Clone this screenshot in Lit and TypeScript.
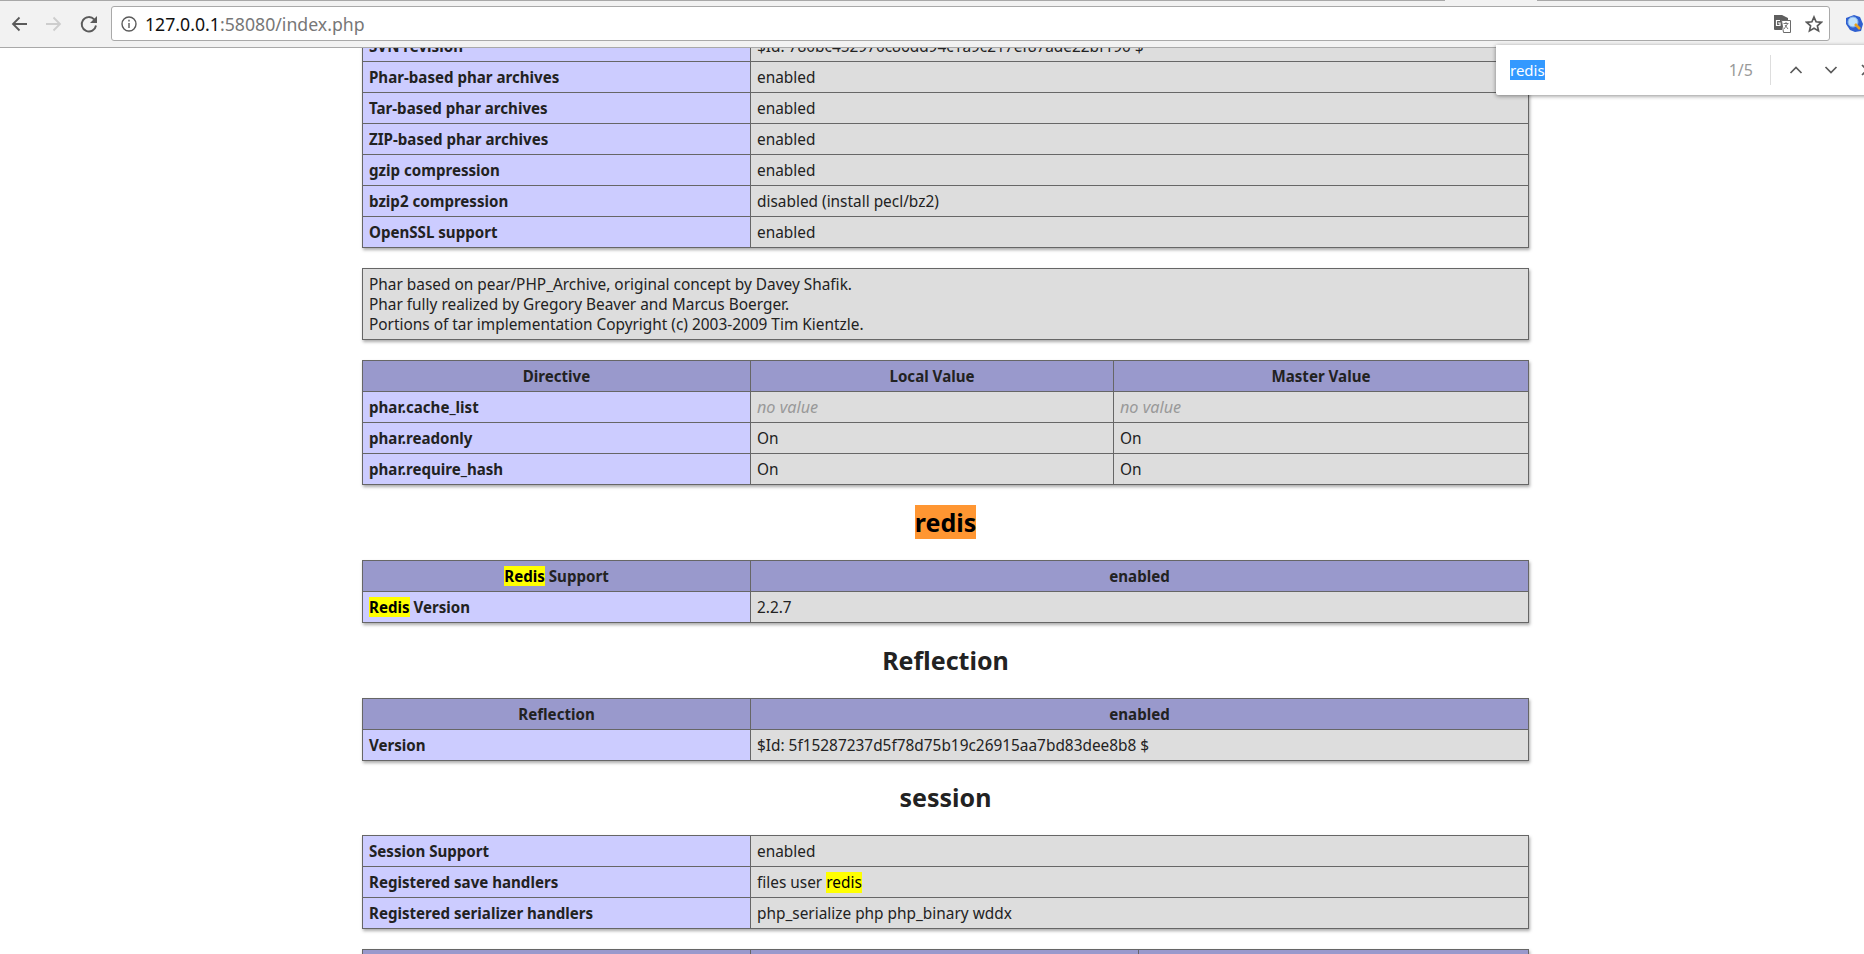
import { LitElement, css, html } from 'lit';
import { customElement } from 'lit/decorators.js';

const mark = (s: string) => html`<span class="hit">${s}</span>`;

@customElement('app-root')
export class AppRoot extends LitElement {
  private row(label: unknown, ...values: unknown[]) {
    return html`<tr>
      <td class="e">${label}</td>
      ${values.map((v) => html`<td class="v">${v}</td>`)}
    </tr>`;
  }

  private head(...titles: unknown[]) {
    return html`<tr class="h">${titles.map((t) => html`<th>${t}</th>`)}</tr>`;
  }

  private noValue() {
    return html`<i class="nv">no value</i>`;
  }

  private toolbar() {
    return html`
      <div class="toolbar">
        <svg width="20" height="20" viewBox="0 0 20 20" fill="none" stroke="#5a5a5a" stroke-width="1.8">
          <path d="M18 10H4M10.500 3.500L4 10l6.500 6.500" />
        </svg>
        <svg width="20" height="20" viewBox="0 0 20 20" fill="none" stroke="#cdcdcd" stroke-width="1.8">
          <path d="M2 10h14M9.500 3.500L16 10l-6.500 6.500" />
        </svg>
        <svg width="20" height="20" viewBox="0 0 20 20" fill="none" stroke="#5a5a5a" stroke-width="1.9">
          <path d="M15.200 5.400A7.200 7.200 0 1 0 17 11.500" />
          <path d="M18 2v7h-7z" fill="#5a5a5a" stroke="none" />
        </svg>
        <div class="omnibox">
          <svg width="16" height="16" viewBox="0 0 16 16" fill="none" stroke="#5a5a5a" stroke-width="1.4">
            <circle cx="8" cy="8" r="7" />
            <path d="M8 7v5M8 3.800v1.800" />
          </svg>
          <span class="url"><b>127.0.0.1</b>:58080/index.php</span>
          <span class="grow"></span>
          <svg width="18" height="18" viewBox="0 0 18 18">
            <path d="M1 0h8l6 3v2H9v10H2a1 1 0 0 1-1-1z" fill="#5f5f5f" />
            <path d="M8.500 5.500h9v12h-7z" fill="#fff" stroke="#6a6a6a" />
            <path d="M10.500 8.500h5M13 7v1.500M11 14l3.500-5M12 10l3 4" stroke="#6a6a6a" fill="none" stroke-width=".9" />
            <path d="M7 5.500H3.500v5H7V8H5" stroke="#fff" fill="none" stroke-width="1.200" />
          </svg>
          <svg class="star" width="18" height="18" viewBox="0 0 18 18" fill="none" stroke="#5a5a5a" stroke-width="1.700">
            <path d="M9 2l2.100 4.800 5.200.5-3.900 3.500 1.100 5.100L9 13.300l-4.500 2.600 1.100-5.100L1.700 7.300l5.200-.5z" />
          </svg>
        </div>
        <svg width="18" height="20" viewBox="0 0 18 20">
          <path d="M1 4l8-3 6 2 3 7-2 7-6 1-5-2-4-6z" fill="#2f5fd0" />
          <circle cx="8" cy="8" r="5" fill="#bfe0fa" stroke="#7fb2ee" />
          <path d="M10 10l5 5" stroke="#e8a020" stroke-width="2.600" />
        </svg>
      </div>
    `;
  }

  private findBar() {
    return html`
      <div class="find">
        <span class="query">redis</span>
        <span class="count">1/5</span>
        <span class="sep"></span>
        <svg width="14" height="10" viewBox="0 0 14 10" fill="none" stroke="#5a5a5a" stroke-width="1.700"><path d="M1.500 8L7 2.500 12.500 8" /></svg>
        <svg width="14" height="10" viewBox="0 0 14 10" fill="none" stroke="#5a5a5a" stroke-width="1.700"><path d="M1.500 2L7 7.500 12.500 2" /></svg>
        <svg width="14" height="14" viewBox="0 0 14 14" fill="none" stroke="#5a5a5a" stroke-width="1.700"><path d="M2 2l10 10M12 2L2 12" /></svg>
      </div>
    `;
  }

  render() {
    return html`
      <div class="tabstrip"><span class="tab"></span></div>
      ${this.toolbar()}
      <div class="viewport">
        <div class="phpinfo">
          <table>
            ${this.row('SVN revision', '$Id: 780bc452970c86dd94c1a9c217ef87ade22bf190 $')}
            ${this.row('Phar-based phar archives', 'enabled')}
            ${this.row('Tar-based phar archives', 'enabled')}
            ${this.row('ZIP-based phar archives', 'enabled')}
            ${this.row('gzip compression', 'enabled')}
            ${this.row('bzip2 compression', 'disabled (install pecl/bz2)')}
            ${this.row('OpenSSL support', 'enabled')}
          </table>
          <table class="single">
            <tr>
              <td class="v">
                Phar based on pear/PHP_Archive, original concept by Davey Shafik.<br />
                Phar fully realized by Gregory Beaver and Marcus Boerger.<br />
                Portions of tar implementation Copyright (c) 2003-2009 Tim Kientzle.
              </td>
            </tr>
          </table>
          <table class="three">
            ${this.head('Directive', 'Local Value', 'Master Value')}
            ${this.row('phar.cache_list', this.noValue(), this.noValue())}
            ${this.row('phar.readonly', 'On', 'On')}
            ${this.row('phar.require_hash', 'On', 'On')}
          </table>
          <h2><span class="current">redis</span></h2>
          <table>
            ${this.head(html`${mark('Redis')} Support`, 'enabled')}
            ${this.row(html`${mark('Redis')} Version`, '2.2.7')}
          </table>
          <h2>Reflection</h2>
          <table class="tight">
            ${this.head('Reflection', 'enabled')}
            ${this.row('Version', '$Id: 5f15287237d5f78d75b19c26915aa7bd83dee8b8 $')}
          </table>
          <h2>session</h2>
          <table>
            ${this.row('Session Support', 'enabled')}
            ${this.row('Registered save handlers', html`files user ${mark('redis')}`)}
            ${this.row('Registered serializer handlers', 'php_serialize php php_binary wddx')}
          </table>
          <table class="three even">
            ${this.head('Directive', 'Local Value', 'Master Value')}
          </table>
        </div>
      </div>
      ${this.findBar()}
    `;
  }

  static styles = css`
    :host {
      display: block;
      position: relative;
      height: 954px;
      overflow: hidden;
      background: #fff;
      font-family: 'Noto Sans', 'DejaVu Sans', sans-serif;
      color: #222;
    }

    .tabstrip {
      height: 1px;
      background: #a8a8a8;
      display: flex;
      justify-content: flex-end;
    }

    .tab {
      width: 92px;
      margin-right: 327px;
      background: #f2f2f2;
    }

    .toolbar {
      height: 47px;
      box-sizing: border-box;
      background: #f2f2f2;
      border-bottom: 1px solid #a9a9a9;
      display: flex;
      align-items: center;
      padding-left: 9px;
      gap: 15px;
    }

    .toolbar svg {
      flex-shrink: 0;
    }

    .omnibox {
      width: 1719px;
      height: 35px;
      box-sizing: border-box;
      margin: -1px 0 0 -3px;
      background: #fff;
      border: 1px solid #a9a9a9;
      border-radius: 3px;
      display: flex;
      align-items: center;
      padding: 0 6px 0 9px;
      gap: 8px;
    }

    .url {
      font-size: 17.7px;
      color: #777;
    }

    .url b {
      font-weight: 400;
      color: #111;
    }

    .grow {
      flex: 1;
    }

    .star {
      margin-left: 6px;
    }

    .viewport {
      height: 906px;
      overflow: hidden;
    }

    .phpinfo {
      width: 1167px;
      margin: -18px 0 0 362px;
      font-size: 15.4px;
      line-height: 20px;
    }

    table {
      width: 100%;
      table-layout: fixed;
      border-collapse: collapse;
      margin-bottom: 20px;
      box-shadow: 1px 2px 3px #aaa;
    }

    table.tight {
      margin-bottom: 19px;
    }

    td,
    th {
      border: 1px solid #666;
      padding: 5px 6px;
      white-space: nowrap;
    }

    th {
      font-size: 15.1px;
      font-weight: 700;
      text-align: center;
    }

    td:first-child,
    th:first-child {
      width: 388px;
      box-sizing: border-box;
    }

    .single td:first-child {
      width: auto;
    }

    .three td:last-child,
    .three th:last-child {
      width: 415px;
      box-sizing: border-box;
    }

    .three.even th:last-child {
      width: 390px;
    }

    .h {
      background: #9999cc;
    }

    .e {
      background: #ccccff;
      font-size: 15.1px;
      font-weight: 700;
    }

    .v {
      background: #dddddd;
      padding-top: 6px;
      padding-bottom: 4px;
    }

    .nv {
      font-size: 16.2px;
      line-height: 0;
      color: #999;
    }

    .hit {
      background: #ffff00;
      color: #000;
    }

    h2 {
      font-size: 25px;
      line-height: 34px;
      font-weight: 700;
      text-align: center;
      margin: 0 0 21px;
    }

    .current {
      background: #ff9632;
      color: #000;
    }

    .find {
      position: absolute;
      top: 45px;
      left: 1496px;
      width: 400px;
      height: 50px;
      box-sizing: border-box;
      background: #fff;
      border-radius: 0 0 2px 2px;
      box-shadow: 0 1px 4px rgba(0, 0, 0, 0.45);
      display: flex;
      align-items: center;
      padding-left: 14px;
      font-size: 15px;
    }

    .find svg {
      flex-shrink: 0;
      margin-left: 21px;
    }

    .find .sep + svg {
      margin-left: 18px;
    }

    .find svg:last-child {
      margin-left: 22px;
    }

    .query {
      background: #3399ff;
      color: #fff;
      line-height: 20px;
    }

    .count {
      margin-left: 184px;
      font-size: 16px;
      color: #999;
    }

    .sep {
      width: 1px;
      height: 30px;
      background: #ddd;
      margin-left: 17px;
    }
  `;
}

declare global {
  interface HTMLElementTagNameMap {
    'app-root': AppRoot;
  }
}
